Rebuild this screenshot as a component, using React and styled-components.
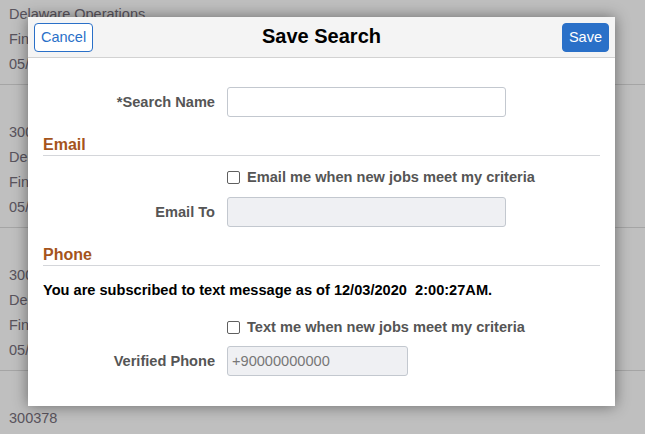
import React from "react";
import styled, { createGlobalStyle } from "styled-components";

const Global = createGlobalStyle`
  html, body { margin: 0; padding: 0; background: #fff; }
  body { font-family: "Liberation Sans", Arial, sans-serif; }
  * { box-sizing: border-box; }
`;

const Page = styled.div`
  width: 645px;
  height: 434px;
  overflow: hidden;
  position: relative;
  background: #fff;
`;

const List = styled.div`
  display: flex;
  flex-direction: column;
  margin-top: -58px;
`;

const Item = styled.div`
  display: flex;
  flex-direction: column;
  gap: 7px;
  padding: 38px 9px 11px;
  border-bottom: 1px solid #dcdcdc;
  font-size: 14.5px;
  color: #77707c;
  line-height: 18px;
`;

const Overlay = styled.div`
  position: absolute;
  inset: 0;
  background: rgba(0, 0, 0, 0.25);
`;

const Dialog = styled.div`
  position: absolute;
  left: 28px;
  top: 17px;
  width: 587px;
  height: 389px;
  background: #fff;
  box-shadow: 0 0 14px rgba(0, 0, 0, 0.45);
  display: flex;
  flex-direction: column;
`;

const Header = styled.div`
  height: 41px;
  background: #f4f4f4;
  border-bottom: 1px solid #d2d2d2;
  display: grid;
  grid-template-columns: 1fr auto 1fr;
  align-items: center;
  padding: 0 6px;
`;

const Title = styled.div`
  font-size: 20px;
  font-weight: bold;
  color: #000;
  margin-top: -2px;
`;

const Button = styled.button`
  justify-self: ${(p) => (p.$primary ? "end" : "start")};
  height: 29px;
  padding: 0 6px;
  border-radius: 4px;
  font-family: "Liberation Sans", Arial, sans-serif;
  font-size: 14.5px;
  border: 1px solid #2a70c8;
  background: ${(p) => (p.$primary ? "#2a70c8" : "#fff")};
  color: ${(p) => (p.$primary ? "#fff" : "#2a70c8")};
`;

const Body = styled.div`
  padding: 29px 15px 0;
  display: flex;
  flex-direction: column;
`;

const Row = styled.div`
  display: grid;
  grid-template-columns: 172px 1fr;
  column-gap: 12px;
  align-items: center;
  margin-top: ${(p) => p.$mt || 0}px;
`;

const Label = styled.label`
  text-align: right;
  font-size: 14.6px;
  font-weight: bold;
  color: #555;
`;

const Input = styled.div`
  width: ${(p) => p.$w}px;
  height: 30px;
  border: 1px solid #c3c8cf;
  border-radius: 3px;
  background: ${(p) => (p.$disabled ? "#eff0f3" : "#fff")};
  font-size: 14.6px;
  color: #777;
  display: flex;
  align-items: center;
  padding: 0 4px;
`;

const Section = styled.div`
  margin-top: ${(p) => p.$mt}px;
  border-bottom: 1px solid #d4d6da;
  padding-bottom: 1px;
  font-size: 16px;
  font-weight: bold;
  color: #a5541b;
  line-height: 19px;
`;

const CheckLine = styled.div`
  grid-column: 2;
  display: flex;
  align-items: center;
  gap: 7px;
  font-size: 14.6px;
  font-weight: bold;
  color: #555;
`;

const Box = styled.span`
  width: 13px;
  height: 13px;
  border: 1px solid #5f5f5f;
  border-radius: 2px;
  background: #fff;
  flex: none;
`;

const Notice = styled.div`
  margin-top: ${(p) => p.$mt}px;
  font-size: 14.6px;
  font-weight: bold;
  color: #000;
  white-space: pre;
`;

const items = [
  ["300371", "Delaware Operations", "Finance Analyst", "05/12/2020"],
  ["300375", "Delaware Operations", "Finance Analyst", "05/12/2020"],
  ["300376", "Delaware Operations", "Finance Analyst", "05/12/2020"],
  ["300378", "Delaware Operations", "Finance Analyst", "05/12/2020"],
];

export default function App() {
  return (
    <Page>
      <Global />
      <List>
        {items.map((it, i) => (
          <Item key={i}>
            {it.map((t, j) => (
              <span key={j}>{t}</span>
            ))}
          </Item>
        ))}
      </List>
      <Overlay />
      <Dialog>
        <Header>
          <Button>Cancel</Button>
          <Title>Save Search</Title>
          <Button $primary>Save</Button>
        </Header>
        <Body>
          <Row>
            <Label>*Search Name</Label>
            <Input $w={279} />
          </Row>
          <Section $mt={18}>Email</Section>
          <Row $mt={13}>
            <CheckLine>
              <Box />
              Email me when new jobs meet my criteria
            </CheckLine>
          </Row>
          <Row $mt={12}>
            <Label>Email To</Label>
            <Input $w={279} $disabled />
          </Row>
          <Section $mt={18}>Phone</Section>
          <Notice $mt={16}>You are subscribed to text message as of 12/03/2020  2:00:27AM.</Notice>
          <Row $mt={21}>
            <CheckLine>
              <Box />
              Text me when new jobs meet my criteria
            </CheckLine>
          </Row>
          <Row $mt={11}>
            <Label>Verified Phone</Label>
            <Input $w={181} $disabled>+90000000000</Input>
          </Row>
        </Body>
      </Dialog>
    </Page>
  );
}
